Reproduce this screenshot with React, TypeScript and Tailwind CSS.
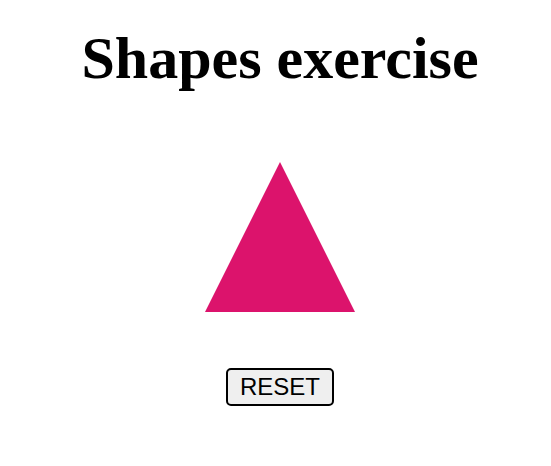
export default function App() {
  return (
    <div className="flex min-h-screen w-full flex-col items-center bg-white pl-[9px]">
      <h1 className="mt-[22px] font-['Liberation_Serif',serif] text-[60px] leading-[72px] font-bold text-black">
        Shapes exercise
      </h1>
      <div className="mt-[68px] h-0 w-0 border-r-[75px] border-b-[150px] border-l-[75px] border-r-transparent border-b-[#dc136c] border-l-transparent" />
      <button className="mt-[56px] rounded-[5px] border-2 border-black bg-[#efefef] px-[12px] py-[3px] font-['Liberation_Sans',sans-serif] text-[24px] leading-[28px] text-black">
        RESET
      </button>
    </div>
  );
}
